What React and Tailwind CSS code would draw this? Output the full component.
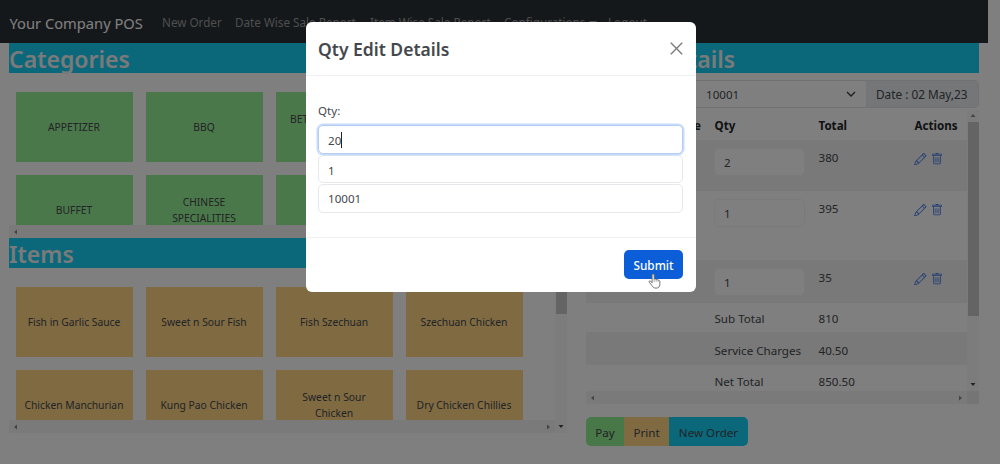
import { useState } from 'react';
import { BsPencil, BsTrash } from 'react-icons/bs';

const navLinks = [
  { label: 'New Order', width: 'w-[73px]' },
  { label: 'Date Wise Sale Report', width: 'w-[135px]' },
  { label: 'Item Wise Sale Report', width: 'w-[134px]' },
  { label: 'Configurations', width: 'w-[104px]', dropdown: true },
  { label: 'Logout', width: 'w-[50px]' },
];

const categories = ['APPETIZER', 'BBQ', 'BETEL BEVERAGES SPECIAL', '', 'BUFFET', 'CHINESE SPECIALITIES', '', ''];

const items = [
  'Fish in Garlic Sauce',
  'Sweet n Sour Fish',
  'Fish Szechuan',
  'Szechuan Chicken',
  'Chicken Manchurian',
  'Kung Pao Chicken',
  'Sweet n Sour Chicken',
  'Dry Chicken Chillies',
];

const orderRows = [
  { qty: 2, total: '380', row: 'h-[51px] bg-[#f2f2f2]' },
  { qty: 1, total: '395', row: 'h-[69px]' },
  { qty: 1, total: '35', row: 'h-[43px] bg-[#f2f2f2]' },
];

const totals = [
  { label: 'Sub Total', value: '810', row: 'h-[29px] pt-[7px]' },
  { label: 'Service Charges', value: '40.50', row: 'h-[33px] pt-[10px] bg-[#f2f2f2]' },
  { label: 'Net Total', value: '850.50', row: 'h-[26px] pt-[8px]' },
];

// Small triangle used by the scrollbars
const Arrow = ({ points, fill = '#8a8a8a' }) => (
  <svg viewBox="0 0 6 6" className="h-[6px] w-[6px]" fill={fill}>
    <polygon points={points} />
  </svg>
);

const HorizontalBar = ({ height }) => (
  <div className={`flex items-center justify-between bg-[#f4f4f4] px-[4px] ${height}`}>
    <Arrow points="4,0.5 4,5.5 1,3" />
    <Arrow points="2,0.5 2,5.5 5,3" />
  </div>
);

const VerticalBar = ({ thumb }) => (
  <div className="flex w-[12px] flex-col items-center bg-[#f8f8f8] pb-[4px]">
    <div className="flex h-[12px] shrink-0 items-center">
      <Arrow points="0.5,4 5.5,4 3,1" />
    </div>
    <div className={`w-[11px] shrink-0 bg-[#c8c8c8] ${thumb}`}></div>
    <div className="mt-auto">
      <Arrow points="0.5,2 5.5,2 3,5" fill="#444" />
    </div>
  </div>
);

const SectionTitle = ({ children, className = '' }) => (
  <h3 className={`h-[30px] bg-[#16d0f5] text-[23px] leading-[33px] font-semibold text-[#f4f4f4] ${className}`}>
    {children}
  </h3>
);

const TileGrid = ({ tiles, color, thumb }) => (
  <div className="flex">
    <div className="min-w-0 flex-1">
      <div className="grid h-[152px] grid-cols-[repeat(4,117px)] content-start gap-x-[13px] gap-y-[13px] overflow-hidden pt-[19px] pl-[6.5px]">
        {tiles.map((tile, index) => (
          <div
            key={index}
            className={`flex h-[70px] items-center justify-center px-[7px] text-center text-[10.3px] leading-[16px] ${color}`}
          >
            {tile}
          </div>
        ))}
      </div>
      <HorizontalBar height="h-[13px]" />
    </div>
    <VerticalBar thumb={thumb} />
  </div>
);

const QtyModal = () => {
  const [qty, setQty] = useState('20');
  return (
    <div className="fixed inset-0 flex items-start bg-black/50 pt-[22px] pl-[305.5px]">
      <div className="h-[270px] w-[390px] rounded-[6px] bg-white text-[#44484c]">
        <div className="flex h-[54px] items-center justify-between border-b border-[#f0f1f3] px-[12.5px]">
          <h5 className="pt-[2px] text-[17.5px] font-semibold">Qty Edit Details</h5>
          <svg viewBox="0 0 12 12" className="h-[13px] w-[13px]" stroke="#777" strokeWidth="1.2" strokeLinecap="round">
            <path d="M1 1L11 11M11 1L1 11" />
          </svg>
        </div>
        <div className="flex h-[162px] flex-col border-b border-[#f0f1f3] px-[12.5px] pt-[26px]">
          <label className="h-[23px] text-[11.6px] leading-[18px]">Qty:</label>
          <div className="relative">
            <input
              value={qty}
              onChange={(e) => setQty(e.target.value)}
              className="h-[29px] w-full rounded-[5px] border border-[#b4cdf5] px-[9px] pt-px text-[11.6px] shadow-[0_0_0_1.5px_#c7dbfb] outline-none"
            />
            <span className="absolute top-[7px] left-[23px] h-[16px] w-px bg-[#222]"></span>
          </div>
          <div className="mt-[1px] h-[28px] rounded-[5px] border border-[#e6e8eb] px-[9px] text-[11.6px] leading-[29px]">1</div>
          <div className="mt-px h-[29px] rounded-[5px] border border-[#e6e8eb] px-[9px] text-[11.6px] leading-[28px]">10001</div>
        </div>
        <div className="flex justify-end pt-[12px] pr-[12.5px]">
          <button className="relative h-[29px] w-[59px] rounded-[5px] bg-[#0b5ed7] pt-[2px] text-[11.8px] font-medium text-white">
            Submit
            <svg viewBox="0 0 14 18" className="absolute top-[23px] left-[24px] h-[16px] w-[13px]">
              <path
                d="M4.3 11V2.2C4.3 .6 6.6.6 6.6 2.2V7C7.2 6.4 8.7 6.5 8.9 7.5C9.6 7 10.9 7.3 11 8.2C11.9 7.8 13 8.3 13 9.4V12.5C13 15.5 11.6 17 8.8 17C6.3 17 5.2 16 4.1 14.2L1.2 10.4C.4 9.3 1.7 8.2 2.7 9.2Z"
                fill="white"
                stroke="#666"
                strokeWidth="1"
                strokeLinejoin="round"
              />
              <path d="M6.6 7V10M8.9 7.5V10M11 8.2V10" stroke="#666" strokeWidth=".6" />
            </svg>
          </button>
        </div>
      </div>
    </div>
  );
};

const OrderDetails = () => (
  <div className="w-[393px]">
    <SectionTitle>
      <span className="inline-flex w-[149px] justify-end whitespace-nowrap">Order Details</span>
    </SectionTitle>
    <div className="mt-[7px] flex h-[28px] rounded-[4px] border border-[#dee2e6] text-[11.6px] leading-[27px]">
      <div className="w-[106px] border-r border-[#dee2e6] bg-[#e9ecef] px-3">Order No</div>
      <div className="flex flex-1 items-center justify-between pr-[10px] pl-[13px]">
        <span className="pt-px">10001</span>
        <svg viewBox="0 0 10 6" className="h-[6px] w-[10px]" fill="none" stroke="#343a40" strokeWidth="1.3">
          <path d="M1 1L5 5L9 1" />
        </svg>
      </div>
      <div className="w-[112px] bg-[#e9ecef] pl-[10px] text-[11.8px]">Date : 02 May,23</div>
    </div>
    <div className="mt-[2px] flex h-[294px] text-[11.6px]">
      <div className="min-w-0 flex-1">
        <div className="flex h-[30px] items-center pt-[2px] font-bold text-[#212529]">
          <span className="w-[116px] pr-px text-right">Price</span>
          <span className="w-[104px] pl-[12.5px]">Qty</span>
          <span className="w-[96px] pl-[12.5px]">Total</span>
          <span className="pl-[12.5px]">Actions</span>
        </div>
        {orderRows.map((item, index) => (
          <div key={index} className={`flex ${item.row}`}>
            <span className="w-[116px]"></span>
            <div className="w-[104px] pt-[8px] pl-[12px]">
              <div className="h-[28px] w-[91px] rounded-[5px] border border-[#f4f5f6] bg-white pl-[9px] leading-[27px]">{item.qty}</div>
            </div>
            <span className="w-[96px] pt-[9px] pl-[12.5px] leading-[18px]">{item.total}</span>
            <div className="flex gap-[4.5px] pt-[12.5px] pl-[12px] text-[#3a76e6]">
              <BsPencil size={12.5} />
              <BsTrash size={12} />
            </div>
          </div>
        ))}
        {totals.map((item) => (
          <div key={item.label} className={`flex leading-[18px] ${item.row}`}>
            <span className="w-[116px]"></span>
            <span className="w-[104px] pl-[12.5px] whitespace-nowrap">{item.label}</span>
            <span className="pl-[12.5px]">{item.value}</span>
          </div>
        ))}
        <HorizontalBar height="h-[13px]" />
      </div>
      <div className="flex flex-col bg-[#eaeaea]">
        <div className="flex h-[281px]">
          <VerticalBar thumb="h-[194px]" />
        </div>
      </div>
    </div>
    <div className="mt-[13px] flex h-[29px] w-[162px] overflow-hidden rounded-[5px] text-[11.6px]">
      <button className="w-[38px] bg-[#90ee90] pt-[2px]">Pay</button>
      <button className="w-[45px] bg-[#ffd585] pt-[2px]">Print</button>
      <button className="flex-1 bg-[#16d0f5] pt-[2px]">New Order</button>
    </div>
  </div>
);

export default function App() {
  return (
    <div className="h-[464px] w-[1000px] overflow-hidden bg-white font-['Noto_Sans',sans-serif] text-[#44484c]">
      <nav className="flex h-[43px] w-[988px] items-center bg-[#2b3035] pt-[3px] pl-[9.5px] text-[#9b9d9e]">
        <span className="w-[152.5px] text-[14.7px] whitespace-nowrap text-white">Your Company POS</span>
        {navLinks.map((link) => (
          <a key={link.label} className={`flex items-center gap-1 text-[11.7px] whitespace-nowrap ${link.width}`}>
            {link.label}
            {link.dropdown && <span className="border-x-[4px] border-t-[4px] border-x-transparent border-t-[#9b9d9e]"></span>}
          </a>
        ))}
      </nav>
      <main className="flex gap-[19px] pl-[9px]">
        <div className="w-[558px]">
          <SectionTitle>Categories</SectionTitle>
          <TileGrid tiles={categories} color="bg-[#96f096]" thumb="h-[60px]" />
          <SectionTitle>Items</SectionTitle>
          <TileGrid tiles={items} color="bg-[#ffd585]" thumb="h-[34px]" />
        </div>
        <OrderDetails />
      </main>
      <QtyModal />
    </div>
  );
}
